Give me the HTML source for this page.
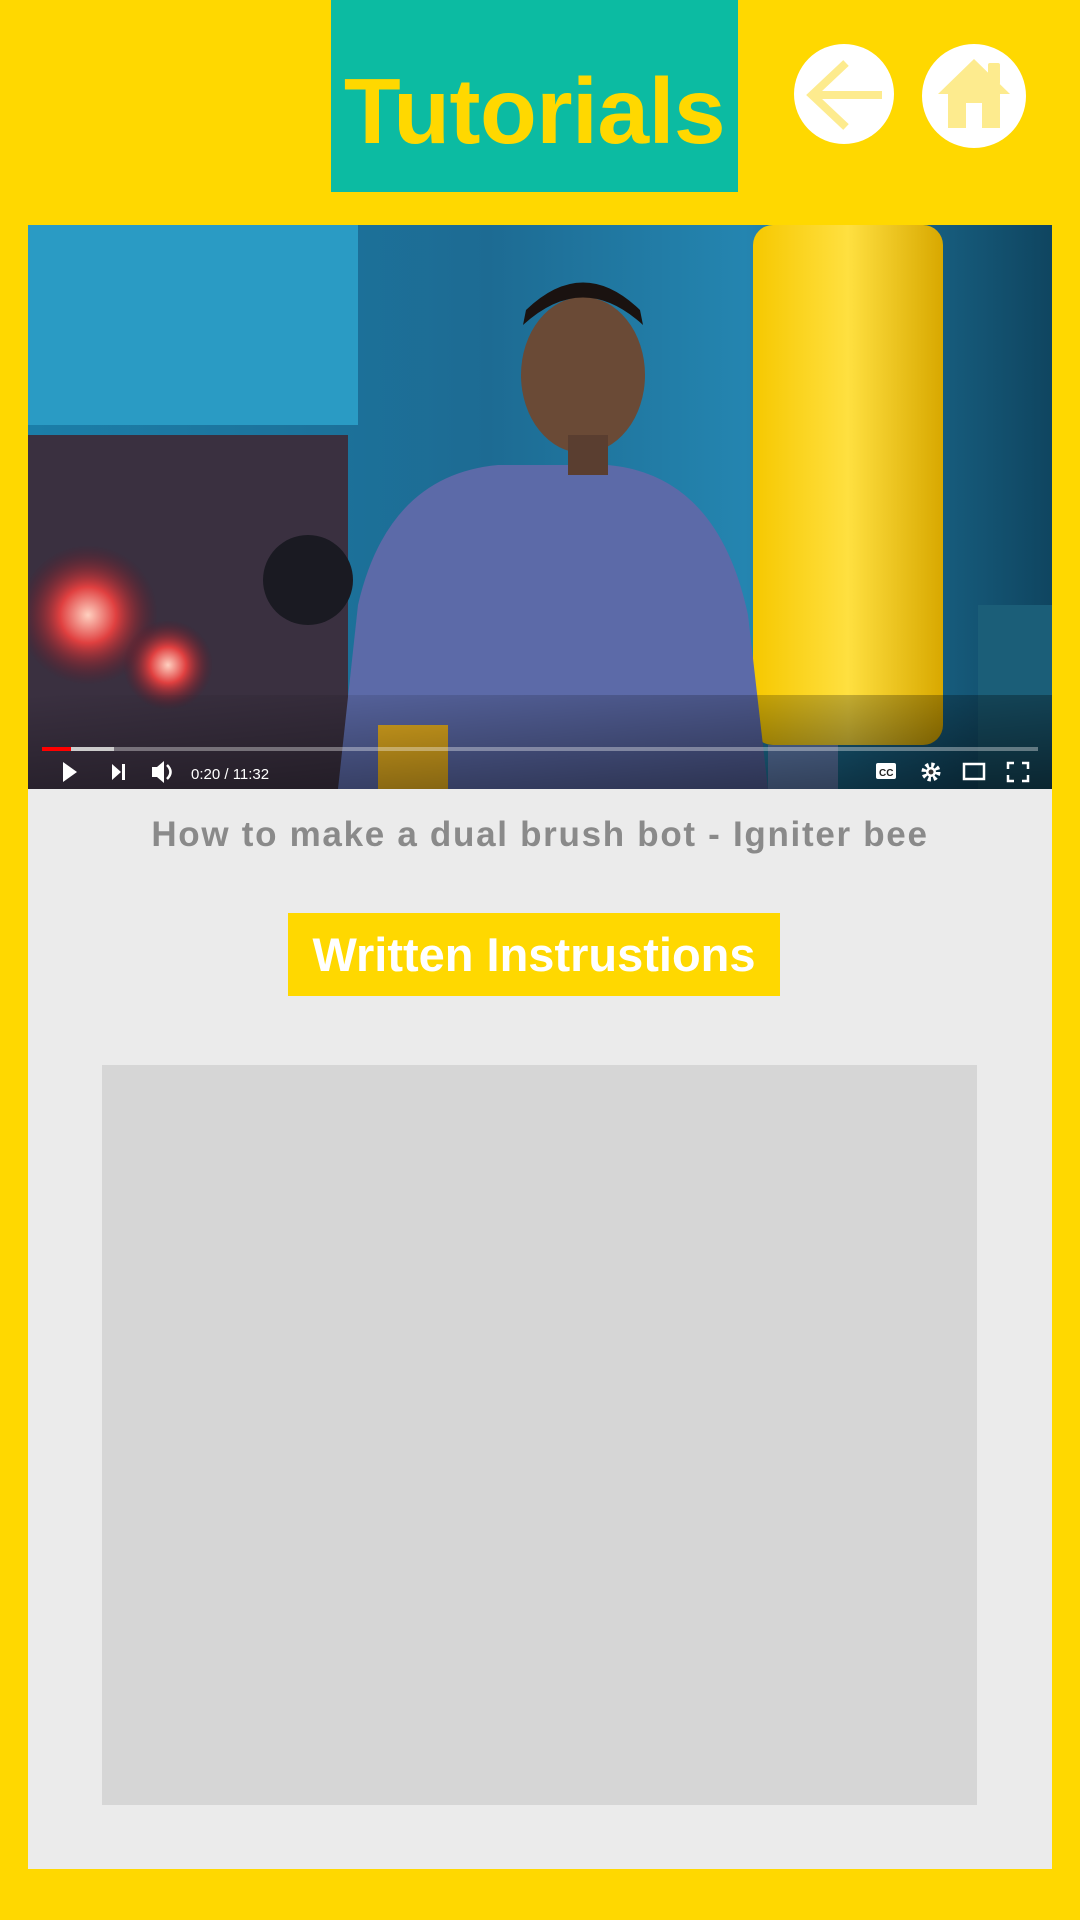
<!DOCTYPE html>
<html><head><meta charset="utf-8"><style>
html,body{margin:0;padding:0;}
body{width:1080px;height:1920px;background:#FFD800;position:relative;overflow:hidden;font-family:"Liberation Sans",sans-serif;}
.title{position:absolute;left:331px;top:0;width:407px;height:192px;background:#0CBBA2;color:#FFD800;font-size:93px;font-weight:bold;text-align:center;line-height:222px;letter-spacing:-0.5px;}
.video{position:absolute;left:28px;top:225px;width:1024px;height:564px;overflow:hidden;background:#1a5f80;}
.panel{position:absolute;left:28px;top:789px;width:1024px;height:1080px;background:#EBEBEB;}
.vt{position:absolute;left:0;width:1024px;top:26px;text-align:center;font-size:35px;color:#8a8a8a;font-weight:bold;letter-spacing:1.7px;}
.btn{position:absolute;left:260px;top:124px;width:492px;height:83px;background:#FFD800;color:#fff;font-size:47px;font-weight:bold;text-align:center;line-height:83px;}
.inner{position:absolute;left:74px;top:276px;width:875px;height:740px;background:#D6D6D6;}
</style></head><body>
<div class="title">Tutorials</div>
<svg style="position:absolute;left:0;top:0" width="1080" height="200">
<circle cx="844" cy="94" r="50" fill="#fff"/>
<path d="M846 63 L812 95 L846 127 M812 95 L882 95" stroke="#FDEB8E" stroke-width="8" fill="none"/>
<circle cx="974" cy="96" r="52" fill="#fff"/>
<rect x="988" y="63" width="12" height="22" rx="2" fill="#FDEB8E"/>
<path d="M974 59 L1010 94 L1000 94 L1000 128 L982 128 L982 103 L966 103 L966 128 L948 128 L948 94 L938 94 Z" fill="#FDEB8E"/>
</svg>
<div class="video">
<svg width="1024" height="564">
<defs>
<linearGradient id="bg" x1="0" x2="1"><stop offset="0" stop-color="#1b7ea8"/><stop offset="0.45" stop-color="#1d6b93"/><stop offset="0.7" stop-color="#2485b0"/><stop offset="1" stop-color="#0f4560"/></linearGradient>
<radialGradient id="red" cx="0.5" cy="0.5" r="0.5"><stop offset="0" stop-color="#ffd0c0"/><stop offset="0.4" stop-color="#e04040"/><stop offset="1" stop-color="#601020" stop-opacity="0"/></radialGradient>
<linearGradient id="yel" x1="0" x2="1"><stop offset="0" stop-color="#f6c800"/><stop offset="0.5" stop-color="#ffe040"/><stop offset="1" stop-color="#d8a800"/></linearGradient>
<linearGradient id="bar" y1="0" y2="1"><stop offset="0" stop-color="#000" stop-opacity="0"/><stop offset="1" stop-color="#000" stop-opacity="0.6"/></linearGradient>
</defs>
<rect width="1024" height="564" fill="url(#bg)"/>
<rect x="0" y="0" width="330" height="200" fill="#2a9bc4"/>
<rect x="0" y="210" width="320" height="354" fill="#3a3040"/>
<circle cx="60" cy="390" r="70" fill="url(#red)"/>
<circle cx="140" cy="440" r="45" fill="url(#red)"/>
<circle cx="280" cy="355" r="45" fill="#1a1a22"/>
<rect x="725" y="0" width="190" height="520" rx="20" fill="url(#yel)"/>
<rect x="950" y="380" width="74" height="184" fill="#1b5e78"/>
<path d="M310 564 L330 380 Q360 250 470 240 L580 240 Q690 250 720 390 L740 564 Z" fill="#5c6aa8"/>
<ellipse cx="555" cy="150" rx="62" ry="78" fill="#6a4a36"/>
<path d="M495 100 Q555 45 615 100 L612 85 Q555 30 498 85 Z" fill="#1a1210"/>
<rect x="540" y="210" width="40" height="40" fill="#5a3e30"/>
<rect x="350" y="500" width="70" height="64" fill="#e8b020"/>
<rect x="740" y="520" width="70" height="44" fill="#6a8ac0"/>
<rect x="0" y="470" width="1024" height="94" fill="url(#bar)"/>
<rect x="14" y="522" width="996" height="4" fill="#fff" fill-opacity="0.35"/>
<rect x="14" y="522" width="72" height="4" fill="#ccc"/>
<rect x="14" y="522" width="29" height="4" fill="#f00"/>
<path d="M35 537 L49 547 L35 557 Z" fill="#fff"/>
<path d="M84 539 L93 547 L84 555 Z M94 539 h3 v16 h-3 Z" fill="#fff"/>
<path d="M124 542 h5 l7 -6 v22 l-7 -6 h-5 Z" fill="#fff"/>
<path d="M139 540 q7 7 0 14" stroke="#fff" stroke-width="2.5" fill="none"/>
<text x="163" y="554" font-size="15" fill="#fff" font-family="Liberation Sans">0:20 / 11:32</text>
<rect x="848" y="538" width="20" height="16" rx="2" fill="#fff"/>
<text x="851" y="551" font-size="10" font-weight="bold" fill="#222" font-family="Liberation Sans">CC</text>
<circle cx="903" cy="547" r="7" fill="none" stroke="#fff" stroke-width="5" stroke-dasharray="3 2.5"/>
<circle cx="903" cy="547" r="5" fill="#fff"/><circle cx="903" cy="547" r="2.5" fill="#333"/>
<rect x="936" y="539" width="20" height="15" fill="none" stroke="#fff" stroke-width="2.5"/>
<path d="M980 544 v-6 h6 M994 538 h6 v6 M1000 550 v6 h-6 M986 556 h-6 v-6" stroke="#fff" stroke-width="2.5" fill="none"/>
</svg>
</div>
<div class="panel">
<div class="vt">How to make a dual brush bot - Igniter bee</div>
<div class="btn">Written Instrustions</div>
<div class="inner"></div>
</div>
</body></html>
